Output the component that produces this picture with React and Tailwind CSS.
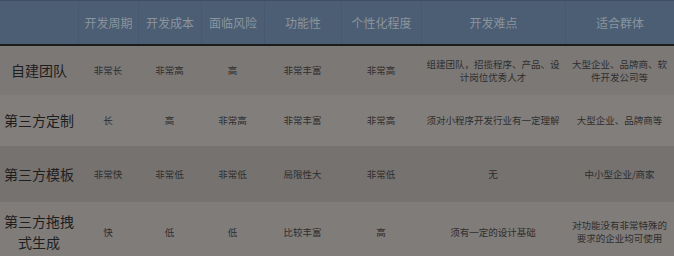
import React from "react";

const COLS = "grid grid-cols-[78px_60px_63px_63px_77px_80px_144px_109px]";

const HEADERS = ["", "开发周期", "开发成本", "面临风险", "功能性", "个性化程度", "开发难点", "适合群体"];

const ROWS = [
  {
    name: "自建团队",
    bg: "bg-[#7c7876]",
    h: "h-[49px]",
    cells: ["非常长", "非常高", "高", "非常丰富", "非常高", "组建团队，招揽程序、产品、设计岗位优秀人才", "大型企业、品牌商、软件开发公司等"],
  },
  {
    name: "第三方定制",
    bg: "bg-[#827e7c]",
    h: "h-[51px]",
    cells: ["长", "高", "非常高", "非常丰富", "非常高", "须对小程序开发行业有一定理解", "大型企业、品牌商等"],
  },
  {
    name: "第三方模板",
    bg: "bg-[#767270]",
    h: "h-[56px]",
    cells: ["非常快", "非常低", "非常低", "局限性大", "非常低", "无", "中小型企业/商家"],
  },
  {
    name: "第三方拖拽式生成",
    bg: "bg-[#807c7a]",
    h: "h-[60px]",
    cells: ["快", "低", "低", "比较丰富", "高", "须有一定的设计基础", "对功能没有非常特殊的要求的企业均可使用"],
  },
];

export default function App() {
  return (
    <div
      className="w-[674px] h-[256px] overflow-hidden bg-[#7c7876]"
      style={{ fontFamily: '"Noto Sans CJK SC", "Noto Sans", sans-serif' }}
    >
      {/* Header */}
      <div className={`${COLS} h-[44px] bg-[#4b5e74] border-t border-[#3f5064]`}>
        {HEADERS.map((h, i) => (
          <div
            key={i}
            className={`flex items-center justify-center text-[12px] text-[#8c949c] ${
              i > 0 ? "border-l border-[#465970]" : ""
            }`}
          >
            {h}
          </div>
        ))}
      </div>
      <div className="h-[2px] bg-[#1c1c1c]" />

      {/* Body */}
      {ROWS.map((row) => (
        <div key={row.name} className={`${COLS} ${row.h} ${row.bg}`}>
          <div className="flex items-center justify-center px-[4px] text-center text-[14px] leading-[21px] text-[#1e1e1e]">
            {row.name}
          </div>
          {row.cells.map((c, i) => (
            <div
              key={i}
              className={`flex items-center justify-center text-center text-[9.5px] leading-[13px] text-[#2e2e2e] ${
                i === 6 ? "px-[6px]" : "px-[2px]"
              }`}
            >
              {c}
            </div>
          ))}
        </div>
      ))}
    </div>
  );
}
